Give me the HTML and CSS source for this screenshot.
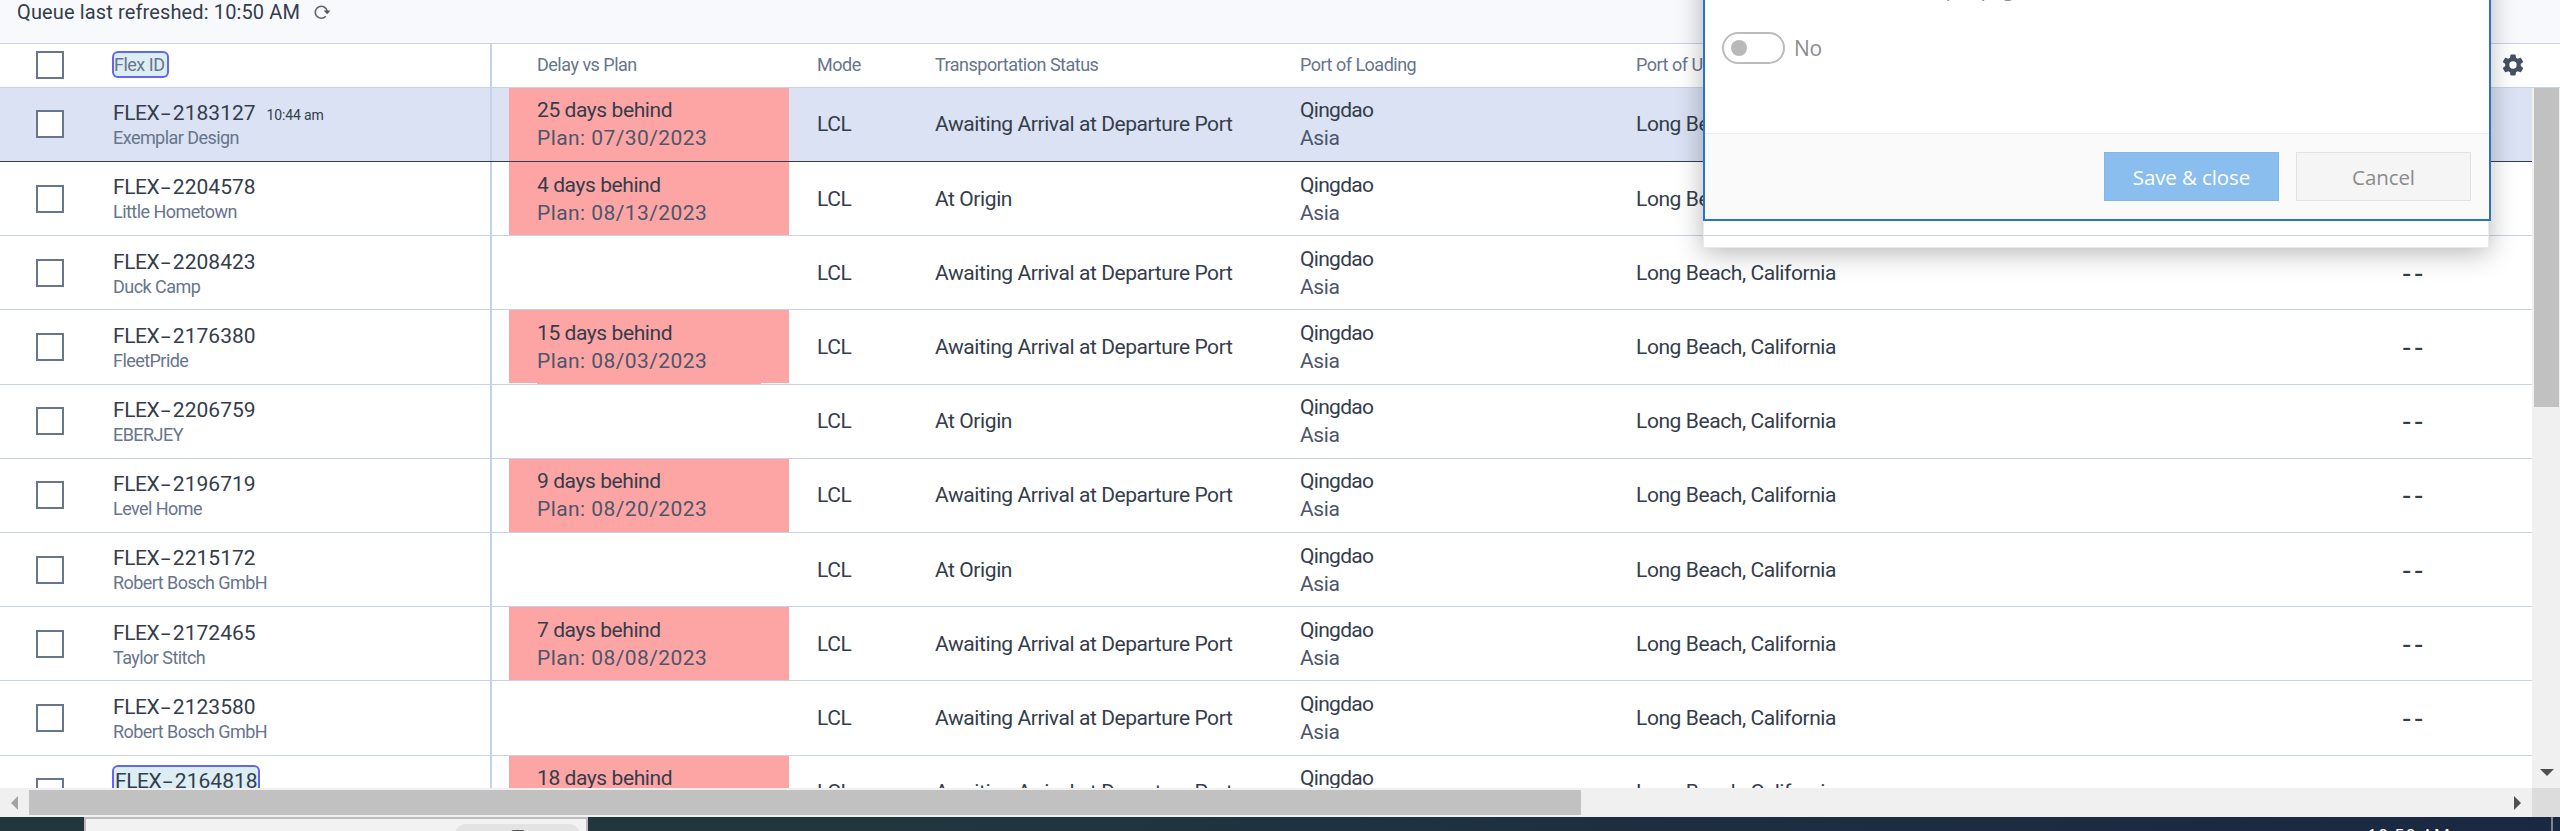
FILE: index.html
```html
<!DOCTYPE html>
<html lang="en">
<head>
<meta charset="utf-8">
<title>Shipment queue</title>
<link rel="stylesheet" href="styles.css">
</head>
<body>
<div class="app">
  <div class="topbar">
    <span>Queue last refreshed: 10:50 AM</span>
    <svg class="refresh" viewBox="0 0 17 16" width="17" height="16"><path d="M11.8 12.2A6 6 0 1 1 13.2 7.2" fill="none" stroke="#5d6675" stroke-width="1.6"/><path d="M9.7 6.6h6.8l-3.4 3.6z" fill="#4c5667"/></svg>
  </div>
  <div class="grid head">
    <div class="check"><i class="box"></i></div>
    <div class="label"><span class="mark">Flex ID</span></div>
    <div class="label">Delay vs Plan</div>
    <div class="label">Mode</div>
    <div class="label">Transportation Status</div>
    <div class="label">Port of Loading</div>
    <div class="label">Port of Unloading</div>
    <div class="gear"><svg viewBox="0 0 24 24" width="26" height="26"><path fill="#465062" fill-rule="evenodd" d="M19.14 12.94c.04-.3.06-.61.06-.94s-.02-.64-.07-.94l2.03-1.58a.49.49 0 0 0 .12-.61l-1.92-3.32a.49.49 0 0 0-.59-.22l-2.39.96a7 7 0 0 0-1.62-.94l-.36-2.54a.48.48 0 0 0-.48-.41h-3.84a.48.48 0 0 0-.47.41l-.36 2.54c-.59.24-1.13.57-1.62.94l-2.39-.96a.48.48 0 0 0-.59.22L2.74 8.87a.48.48 0 0 0 .12.61l2.03 1.58c-.05.3-.09.63-.09.94s.02.64.07.94l-2.03 1.58a.49.49 0 0 0-.12.61l1.92 3.32c.12.22.37.29.59.22l2.39-.96c.5.38 1.03.7 1.62.94l.36 2.54c.05.24.24.41.48.41h3.84c.24 0 .44-.17.47-.41l.36-2.54a7 7 0 0 0 1.62-.94l2.39.96c.22.08.47 0 .59-.22l1.92-3.32a.48.48 0 0 0-.12-.61zM12 15.4a3.4 3.4 0 1 1 0-6.8 3.4 3.4 0 0 1 0 6.8z"/></svg></div>
  </div>
  <div class="body">
    <div class="rows" id="rows"></div>
    <div class="vbar"><div class="vthumb"></div><svg class="down" width="14" height="7" viewBox="0 0 14 7"><path d="M0 0h14L7 7z" fill="#505050"/></svg></div>
  </div>
  <div class="hbar">
    <svg class="left" width="7" height="14" viewBox="0 0 7 14"><path d="M7 0v14L0 7z" fill="#a3a3a3"/></svg>
    <div class="hthumb"></div>
    <svg class="right" width="7" height="14" viewBox="0 0 7 14"><path d="M0 0v14l7-7z" fill="#505050"/></svg>
    <div class="corner"></div>
  </div>
  <div class="taskbar">
    <div class="search"><div class="pill"><i></i></div></div>
    <div class="clock">10:50 AM</div>
    <div class="peek"></div>
  </div>
</div>
<div class="backing"></div>
<div class="modal">
  <div class="modal-body">
    <div class="setting">Show records per page</div>
    <div class="switch"><span class="toggle"><i></i></span><span>No</span></div>
  </div>
  <div class="modal-foot"><div class="btn save">Save &amp; close</div><div class="btn">Cancel</div></div>
</div>
<script src="rows.js"></script>
</body>
</html>
```
FILE: styles.css
```css
* { box-sizing: border-box; }
body { margin: 0; width: 2560px; height: 831px; overflow: hidden; position: relative; background: #fff; font-family: Roboto, "Liberation Sans", sans-serif; color: #343d4b; }
.app { display: flex; flex-direction: column; height: 831px; }
.topbar { height: 44px; background: #f8f9fd; border-bottom: 1px solid #c7d2e6; padding-left: 17px; display: flex; align-items: flex-start; gap: 14px; font-size: 20px; line-height: 24px; letter-spacing: .13px; }
.refresh { margin-top: 4px; }

.grid { display: grid; grid-template-columns: 112px 378px 327px 118px 365px 336px 766px 1fr; position: relative; }
.grid::before { content: ""; position: absolute; left: 490px; top: 0; bottom: 0; width: 2px; background: #c7d2e8; }
.head { height: 44px; border-bottom: 1px solid #c7d2e6; color: #67758d; font-size: 18px; letter-spacing: -.5px; line-height: 22px; }
.head .label { padding-top: 10px; }
.label:nth-child(3) { padding-left: 47px; }
.head .check { padding: 7px 0 0 36px; }
.box { display: block; width: 28px; height: 28px; border: 2px solid #67758d; background: #fff; }
.mark { display: inline-block; background: #dcedf4; box-shadow: 0 0 0 2px #6366f1; border-radius: 4px; }
.label .mark { margin: -1px 0 0 2px; height: 23px; padding-top: 1px; width: 53px; white-space: nowrap; }
.gear { padding: 8px 0 0 98px; }

.body { display: flex; height: 700px; overflow: hidden; }
.rows { width: 2532px; }
.row { height: 74px; border-bottom: 1px solid #c7d2e6; font-size: 21px; letter-spacing: -.42px; line-height: 28px; }
.row.tall { height: 75px; }
.row.selected { background: #dae2f3; border-bottom-color: #343d4b; }
.row > .check { padding: 22px 0 0 36px; }
.row > .one { padding-top: 22px; }
.row > .two { padding-top: 8px; }
.row > .ident { padding: 12px 0 0 1px; }
.row.shift > .check { padding-top: 23px; }
.row.shift > .one { padding-top: 23px; }
.row.shift > .two { padding-top: 9px; }
.row.low > .ident { padding-top: 13px; }
.delay { margin: 0 28px 0 19px; padding-left: 28px; }
.delay.late { background: #fda5a5; }
.delay.notch { background: linear-gradient(#fda5a5, #fda5a5) 0 0 / 100% calc(100% - 1px) no-repeat, linear-gradient(#fda5a5, #fda5a5) 28px 100% / 224px 1px no-repeat; }
.sub { color: #4c566a; }
.delay .sub { letter-spacing: .42px; }
.port { letter-spacing: -.7px; }
.ident .ref { display: flex; align-items: baseline; line-height: 26px; height: 26px; }
.ident .dash { width: 13.5px; text-align: center; letter-spacing: 0; transform: scaleX(1.7); }
.ident .num { letter-spacing: .02px; }
.ident .time { font-size: 14px; letter-spacing: -.15px; margin-left: 11px; }
.ident .client { font-size: 18px; letter-spacing: -.55px; line-height: 24px; color: #67758d; }
.ref.mark { width: 144px; height: 27px; padding-left: 1px; margin: -1px 0 0 1px; padding-top: 1px; }
.none { font-family: "Liberation Sans", sans-serif; font-size: 28px; letter-spacing: 2.7px; }

.vbar { width: 28px; background: #f0f0f0; padding: 0 1px 12px 2px; display: flex; flex-direction: column; justify-content: space-between; }
.vthumb { height: 319px; background: #c1c1c1; }
.down { margin-left: 6px; }
.hbar { height: 29px; background: #f0f0f0; display: flex; align-items: center; }
.left { margin: 0 11px; }
.hthumb { width: 1552px; height: 25px; background: #c1c1c1; }
.right { margin-left: auto; margin-right: 11px; }
.corner { width: 28px; height: 29px; background: #dcdcdc; }
.taskbar { height: 14px; overflow: hidden; display: flex; background: linear-gradient(90deg, #22363e 0%, #22363e 35%, #1e2e40 65%, #1a2842 100%); padding-left: 84px; }
.search { width: 504px; height: 30px; background: #f2f2f2; border: 2px solid #bcbcbc; padding: 5px 0 0 369px; }
.pill { width: 125px; height: 22px; border-radius: 11px; background: #e3e3e3; padding: 6px 0 0 56px; }
.pill i { display: block; width: 14px; height: 3px; background: #555; border-radius: 3px 3px 0 0; }
.clock { margin-left: auto; font-family: "Open Sans", sans-serif; font-size: 18px; line-height: 24px; padding-top: 6px; width: 184px; height: 34px; color: #fff; white-space: nowrap; letter-spacing: .7px; }
.peek { width: 9px; height: 14px; border-left: 2px solid #7c8590; }

.backing { position: absolute; left: 1703px; top: -40px; width: 786px; height: 288px; border: 1px solid #eaeaea; border-top: 0; box-shadow: 0 4px 26px rgba(0, 0, 0, .3); }
.modal { position: absolute; left: 1703px; top: -40px; width: 788px; height: 261px; border: 2px solid #2b74c4; background: #fff; font-family: "Open Sans", "Noto Sans", sans-serif; color: #8c8c8c; display: flex; flex-direction: column; }
.modal-body { flex: 1; padding: 15px 0 0 17px; }
.setting { font-size: 19px; line-height: 26px; width: 302px; text-align: right; white-space: nowrap; }
.switch { display: flex; align-items: center; gap: 9px; margin-top: 28px; font-size: 21px; line-height: 32px; letter-spacing: -.3px; }
.switch span:last-child { padding-top: 1px; }
.toggle { width: 63px; height: 32px; border: 2px solid #bcbcbd; border-radius: 16px; padding: 6px 7px; }
.toggle i { display: block; width: 16px; height: 16px; border-radius: 50%; background: #b9b9ba; }
.modal-foot { height: 86px; border-top: 1px solid #ececec; background: #fafafa; display: flex; justify-content: flex-end; gap: 17px; padding: 18px 18px 0 0; }
.btn { width: 175px; height: 49px; border: 1px solid #e2e2e2; background: #f5f5f5; text-align: center; font-size: 20.5px; line-height: 48px; letter-spacing: -.1px; }
.save { background: #89beee; border-color: #7fb8ec; color: #fff; }
```
FILE: rows.js
```js
// [number, client, days behind, planned date, status, row classes]
const AWAIT = 'Awaiting Arrival at Departure Port';
const ORIGIN = 'At Origin';
const shipments = [
  ['2183127', 'Exemplar Design', '25', '07/30/2023', AWAIT, 'selected'],
  ['2204578', 'Little Hometown', '4', '08/13/2023', ORIGIN, 'shift'],
  ['2208423', 'Duck Camp', '', '', AWAIT, 'shift low'],
  ['2176380', 'FleetPride', '15', '08/03/2023', AWAIT, 'tall shift low'],
  ['2206759', 'EBERJEY', '', '', ORIGIN, ''],
  ['2196719', 'Level Home', '9', '08/20/2023', AWAIT, ''],
  ['2215172', 'Robert Bosch GmbH', '', '', ORIGIN, 'shift'],
  ['2172465', 'Taylor Stitch', '7', '08/08/2023', AWAIT, 'shift low'],
  ['2123580', 'Robert Bosch GmbH', '', '', AWAIT, 'tall shift low'],
  ['2164818', '', '18', '', AWAIT, '']
];
document.getElementById('rows').innerHTML = shipments.map(([num, client, days, date, status, cls], i) => `
  <div class="grid row ${cls}">
    <div class="check"><i class="box"></i></div>
    <div class="ident">
      <div class="ref ${i === 9 ? 'mark' : ''}"><span>FLEX</span><span class="dash">-</span><span class="num">${num}</span>${i === 0 ? '<span class="time">10:44 am</span>' : ''}</div>
      <div class="client">${client}</div>
    </div>
    <div class="two delay ${days ? (i === 3 ? 'notch' : 'late') : ''}">${days ? `<div>${days} days behind</div>` : ''}${date ? `<div class="sub">Plan: ${date}</div>` : ''}</div>
    <div class="one">LCL</div>
    <div class="one">${status}</div>
    <div class="two"><div class="port">Qingdao</div>${i < 9 ? '<div class="sub">Asia</div>' : ''}</div>
    <div class="one">Long Beach, California</div>
    <div class="one none">${i > 1 && i < 9 ? '--' : ''}</div>
  </div>`).join('');
```
